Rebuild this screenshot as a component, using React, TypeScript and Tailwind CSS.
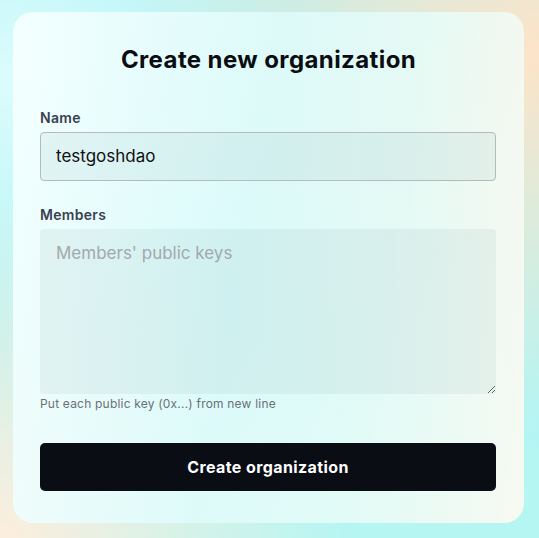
import React, { useEffect, useRef, useState } from "react";

const font = { fontFamily: "Inter, 'Noto Sans', sans-serif" };

export default function App() {
  const [name, setName] = useState("testgoshdao");
  const [members, setMembers] = useState("");
  const nameRef = useRef<HTMLInputElement>(null);

  // focus name field with caret at the end
  useEffect(() => {
    const el = nameRef.current;
    if (!el) return;
    el.focus();
    el.setSelectionRange(el.value.length, el.value.length);
  }, []);

  return (
    <div
      className="w-[539px] h-[538px] pt-[12px] pl-[13px] pr-[15px] pb-[15px] bg-[radial-gradient(ellipse_at_100%_10%,#fde4c8_0%,rgba(253,228,200,0)_55%),radial-gradient(ellipse_at_0%_100%,#fdeedd_0%,rgba(253,238,221,0)_45%),radial-gradient(ellipse_at_0%_15%,#dcfcfc_0%,rgba(220,252,252,0)_40%),linear-gradient(180deg,#aef2f6_0%,#b6f6f2_100%)]"
      style={font}
    >
      <div className="h-[511px] rounded-[20px] bg-[linear-gradient(100deg,rgba(246,255,255,0.92)_0%,rgba(222,251,251,0.9)_45%,rgba(230,251,247,0.9)_70%,rgba(253,250,242,0.92)_100%)] px-[27px] pt-[32px] pb-[32px] flex flex-col">
        <h1 className="text-center text-[24px] leading-8 font-bold tracking-[0.4px] text-[#0b0d12]">
          Create new organization
        </h1>

        <label className="mt-8 text-sm leading-5 font-semibold tracking-[0.3px] text-[#3a4150]">Name</label>
        <input
          ref={nameRef}
          value={name}
          onChange={(e) => setName(e.target.value)}
          className="mt-1 h-[49px] w-[456px] rounded-[4px] border border-[#b3bbbc] bg-[#7a9a9a]/10 px-[15px] text-[17px] text-[#111] caret-black outline-none"
        />

        <label className="mt-6 text-sm leading-5 font-semibold tracking-[0.3px] text-[#3a4150]">Members</label>
        <textarea
          value={members}
          onChange={(e) => setMembers(e.target.value)}
          placeholder="Members' public keys"
          className="mt-1 h-[166px] w-[456px] rounded-[4px] bg-[#7a9a9a]/10 px-[16px] py-[12px] text-[17px] text-[#111] placeholder:text-[#a2a9ad] outline-none"
        />
        <p className="mt-[2px] text-xs leading-4 tracking-[0.2px] text-[#6b7176]">Put each public key (0x...) from new line</p>

        <button className="mt-[31px] h-[48px] w-[456px] rounded-[5px] bg-[#0a0d14] text-white text-base font-bold tracking-[0.4px]">
          Create organization
        </button>
      </div>
    </div>
  );
}
